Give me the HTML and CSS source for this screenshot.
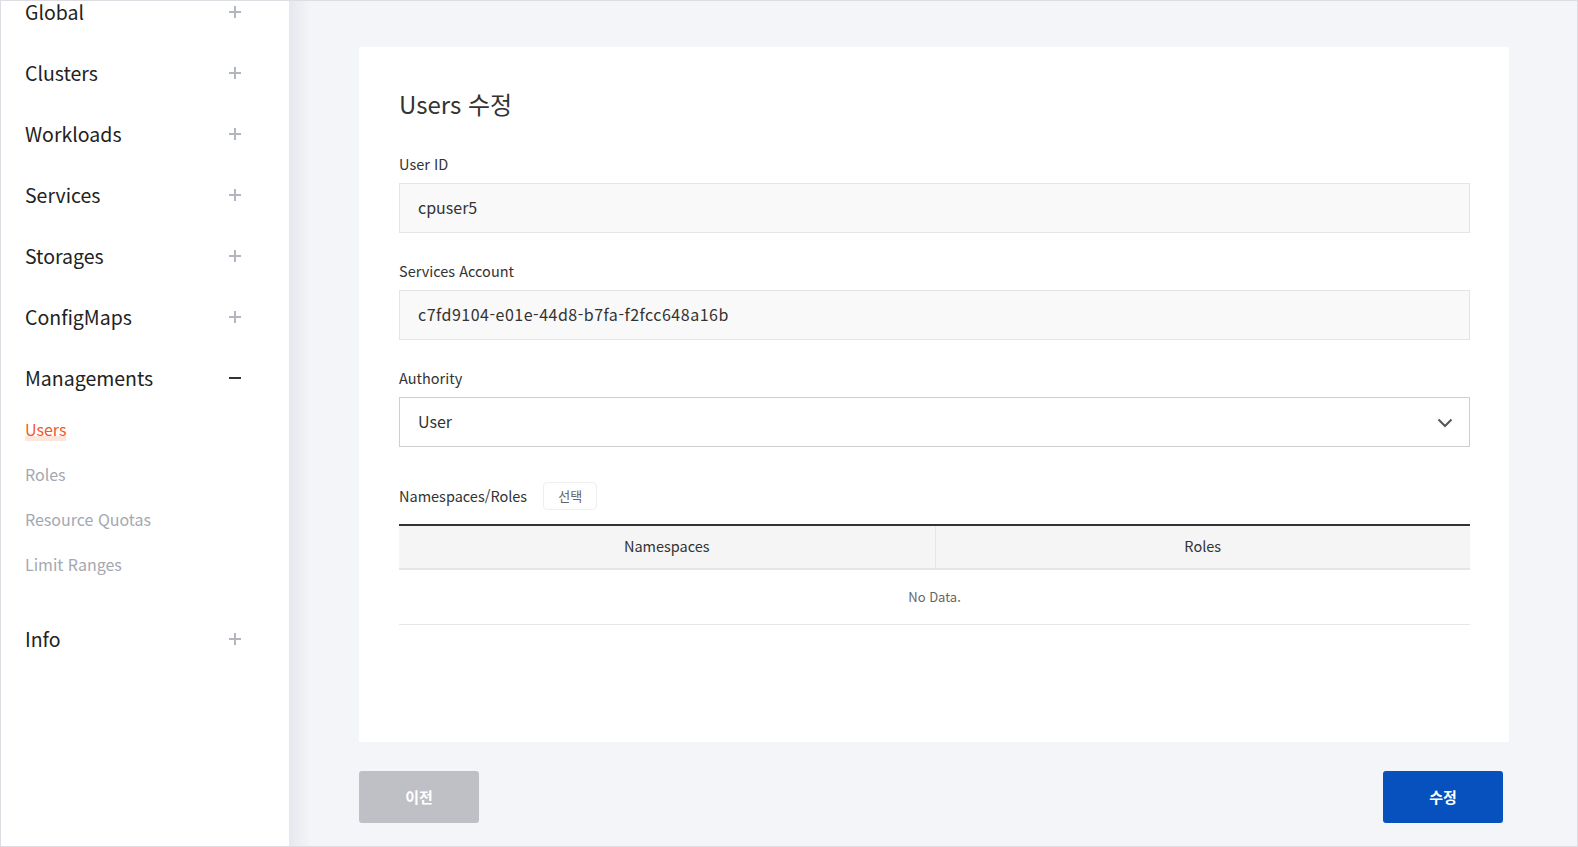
FILE: index.html
```html
<!DOCTYPE html>
<html lang="ko">
<head>
<meta charset="utf-8">
<title>Users 수정</title>
<link rel="stylesheet" href="styles.css">
</head>
<body>
<div class="frame">
  <aside class="sidebar">
    <ul class="nav">
      <li class="nav-item"><span>Global</span><i class="plus"></i></li>
      <li class="nav-item"><span>Clusters</span><i class="plus"></i></li>
      <li class="nav-item"><span>Workloads</span><i class="plus"></i></li>
      <li class="nav-item"><span>Services</span><i class="plus"></i></li>
      <li class="nav-item"><span>Storages</span><i class="plus"></i></li>
      <li class="nav-item"><span>ConfigMaps</span><i class="plus"></i></li>
      <li class="nav-item open"><span>Managements</span><i class="minus"></i></li>
      <li class="sub">
        <ul class="sub-list">
          <li class="sub-item active"><span class="mark">Users</span></li>
          <li class="sub-item">Roles</li>
          <li class="sub-item">Resource Quotas</li>
          <li class="sub-item">Limit Ranges</li>
        </ul>
      </li>
      <li class="nav-item"><span>Info</span><i class="plus"></i></li>
    </ul>
  </aside>
  <main class="main">
    <section class="card">
      <h1 class="title">Users 수정</h1>
      <div class="field">
        <label class="label">User ID</label>
        <div class="input">cpuser5</div>
      </div>
      <div class="field">
        <label class="label">Services Account</label>
        <div class="input input-code">c7fd9104-e01e-44d8-b7fa-f2fcc648a16b</div>
      </div>
      <div class="field field-last">
        <label class="label">Authority</label>
        <div class="select">
          <span>User</span>
          <svg class="chevron" width="16" height="10" viewBox="0 0 16 10"><path d="M1.5 1.5 L8 8 L14.5 1.5" fill="none" stroke="#555" stroke-width="2"/></svg>
        </div>
      </div>
      <div class="ns-row">
        <span class="label-inline">Namespaces/Roles</span>
        <button class="btn-select">선택</button>
      </div>
      <div class="table">
        <div class="thead">
          <div class="th">Namespaces</div>
          <div class="th">Roles</div>
        </div>
        <div class="empty">No Data.</div>
      </div>
    </section>
    <div class="actions">
      <button class="btn btn-prev">이전</button>
      <button class="btn btn-submit">수정</button>
    </div>
  </main>
</div>
</body>
</html>
```
FILE: styles.css
```css
* { box-sizing: border-box; }
html, body { margin: 0; padding: 0; }
body {
  font-family: "Noto Sans CJK KR", "Noto Sans", sans-serif;
  color: #333;
  background: #fff;
}
.frame {
  width: 1578px;
  height: 847px;
  border: 1px solid #dcdde2;
  display: flex;
  overflow: hidden;
}
.sidebar {
  width: 288px;
  flex: none;
  background: #fff;
  overflow: hidden;
}
.nav {
  list-style: none;
  margin: -20px 0 0;
  padding: 0 48px 0 24px;
}
.nav-item {
  height: 61px;
  display: flex;
  align-items: center;
  justify-content: space-between;
  font-size: 19.5px;
  line-height: 20px;
  color: #222;
}
.plus, .minus {
  position: relative;
  width: 12px;
  height: 12px;
  display: block;
}
.plus::before, .plus::after, .minus::before {
  content: "";
  position: absolute;
  background: #b2b6be;
}
.plus::before { left: 0; right: 0; top: 5px; height: 2px; }
.plus::after { top: 0; bottom: 0; left: 5px; width: 2px; }
.minus::before { left: 0; right: 0; top: 5px; height: 2px; background: #333; }
.sub-list {
  list-style: none;
  margin: 0;
  padding: 0 0 20px;
}
.sub-item {
  height: 45px;
  display: flex;
  align-items: center;
  padding-bottom: 4px;
  font-size: 16px;
  color: #a4a8b1;
}
.sub-item.active { color: #f2582a; }
.mark {
  background: linear-gradient(to bottom, transparent 80%, #fde6de 80%);
}
.main {
  flex: 1;
  background: linear-gradient(to right, #e7e8ed 0, #f4f5f9 22px);
  padding: 46px 68px 0 70px;
  display: flex;
  flex-direction: column;
}
.card {
  background: #fff;
  height: 695px;
  padding: 40px 39px 0 40px;
}
.title {
  margin: 0 0 34px;
  font-size: 24px;
  line-height: 34px;
  font-weight: 400;
  color: #333;
}
.field { margin-bottom: 29px; }
.field-last { margin-bottom: 35px; }
.label {
  display: block;
  font-size: 14.5px;
  line-height: 18px;
  padding-bottom: 4px;
  margin-bottom: 6px;
  color: #333;
}
.input {
  height: 50px;
  border: 1px solid #e5e5e5;
  background: #f9f9f9;
  padding: 0 18px 3px;
  display: flex;
  align-items: center;
  font-size: 16px;
  color: #333;
}
.input-code { letter-spacing: 0.5px; }
.select {
  height: 50px;
  border: 1px solid #cfcfcf;
  background: #fff;
  padding: 0 16px 3px 18px;
  display: flex;
  align-items: center;
  justify-content: space-between;
  font-size: 16px;
  color: #333;
}
.chevron { margin-top: 4px; }
.ns-row {
  display: flex;
  align-items: center;
  gap: 16px;
  height: 28px;
  margin-bottom: 14px;
}
.label-inline { font-size: 14.5px; color: #333; padding-bottom: 2px; }
.btn-select {
  height: 28px;
  width: 54px;
  border: 1px solid #eeeeee;
  border-radius: 4px;
  background: #fff;
  font-family: inherit;
  font-size: 13px;
  color: #666;
  padding: 0 0 2px;
}
.table { border-top: 2px solid #333; }
.thead {
  display: grid;
  grid-template-columns: 1fr 1fr;
  background: #f5f5f5;
  border-bottom: 2px solid #e6e6e6;
}
.th {
  height: 42px;
  display: flex;
  align-items: center;
  justify-content: center;
  padding-bottom: 3px;
  font-size: 14.5px;
  color: #333;
}
.th + .th { border-left: 1px solid #e6e6e6; }
.empty {
  height: 55px;
  display: flex;
  align-items: center;
  justify-content: center;
  padding-bottom: 2px;
  font-size: 13px;
  color: #666;
  border-bottom: 1px solid #e6e6e6;
}
.actions {
  display: flex;
  justify-content: space-between;
  margin-top: 29px;
  padding-right: 6px;
}
.btn {
  width: 120px;
  height: 52px;
  border: 0;
  border-radius: 3px;
  color: #fff;
  font-family: inherit;
  font-size: 15px;
  font-weight: 700;
  padding: 0 0 2px;
}
.btn-prev { background: #bfc0c5; }
.btn-submit { background: #0751be; }
```
